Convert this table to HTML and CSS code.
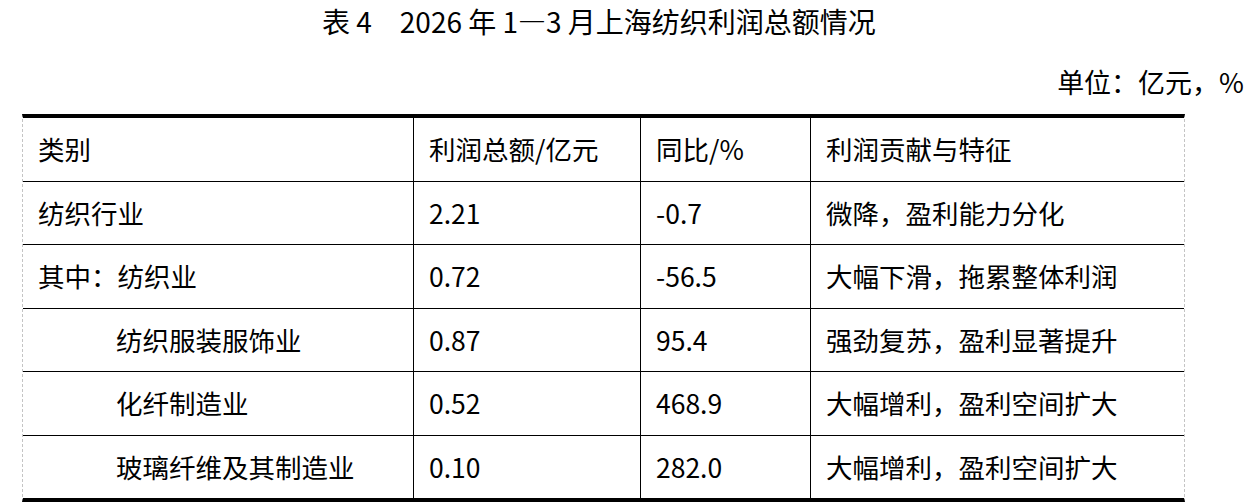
FILE: index.html
```html
<!DOCTYPE html>
<html lang="zh-CN">
<head>
<meta charset="utf-8">
<title>表4 2026年1—3月上海纺织利润总额情况</title>
<link rel="stylesheet" href="styles.css">
</head>
<body>
<div class="page">
  <h1 class="title">表 4&emsp;2026 年 1—3 月上海纺织利润总额情况</h1>
  <div class="unit">单位：亿元，%</div>
  <table class="data">
    <colgroup>
      <col class="c1"><col class="c2"><col class="c3"><col class="c4">
    </colgroup>
    <thead>
      <tr><th>类别</th><th>利润总额/亿元</th><th>同比/%</th><th>利润贡献与特征</th></tr>
    </thead>
    <tbody>
      <tr><td>纺织行业</td><td>2.21</td><td>-0.7</td><td>微降，盈利能力分化</td></tr>
      <tr><td>其中：纺织业</td><td>0.72</td><td>-56.5</td><td>大幅下滑，拖累整体利润</td></tr>
      <tr><td class="sub">纺织服装服饰业</td><td>0.87</td><td>95.4</td><td>强劲复苏，盈利显著提升</td></tr>
      <tr><td class="sub">化纤制造业</td><td>0.52</td><td>468.9</td><td>大幅增利，盈利空间扩大</td></tr>
      <tr class="last"><td class="sub">玻璃纤维及其制造业</td><td>0.10</td><td>282.0</td><td>大幅增利，盈利空间扩大</td></tr>
    </tbody>
  </table>
</div>
</body>
</html>
```

FILE: styles.css
```css
html, body {
  margin: 0;
  padding: 0;
  background: #fff;
}
body {
  font-family: "Noto Sans CJK SC", "Noto Sans", sans-serif;
  color: #000;
}
.page {
  width: 1252px;
}
.title {
  margin: 0 0 0 322px;
  font-size: 28px;
  font-weight: normal;
  line-height: 42px;
  white-space: nowrap;
}
.unit {
  margin: 20px 8px 12px 0;
  text-align: right;
  font-size: 27px;
  line-height: 40px;
}
.data {
  margin-left: 22px;
  width: 1163px;
  table-layout: fixed;
  border-collapse: separate;
  border-spacing: 0;
  border-top: 4px solid #000;
  border-bottom: 4px solid #000;
  border-left: 1px dashed #c4c4c4;
  border-right: 1px dashed #c4c4c4;
}
.c1 { width: 391px; }
.c2 { width: 227px; }
.c3 { width: 170px; }
.c4 { width: auto; }
.data th,
.data td {
  font-size: 26.5px;
  font-weight: normal;
  text-align: left;
  vertical-align: middle;
  height: 62.5px;
  padding: 0 0 0 15px;
  border-right: 1px solid #000;
  border-bottom: 1px solid #000;
  white-space: nowrap;
  line-height: 1;
}
.data th:last-child,
.data td:last-child {
  border-right: none;
}
.data tr.last td {
  border-bottom: none;
}
.data td.sub {
  padding-left: 93px;
}
```
